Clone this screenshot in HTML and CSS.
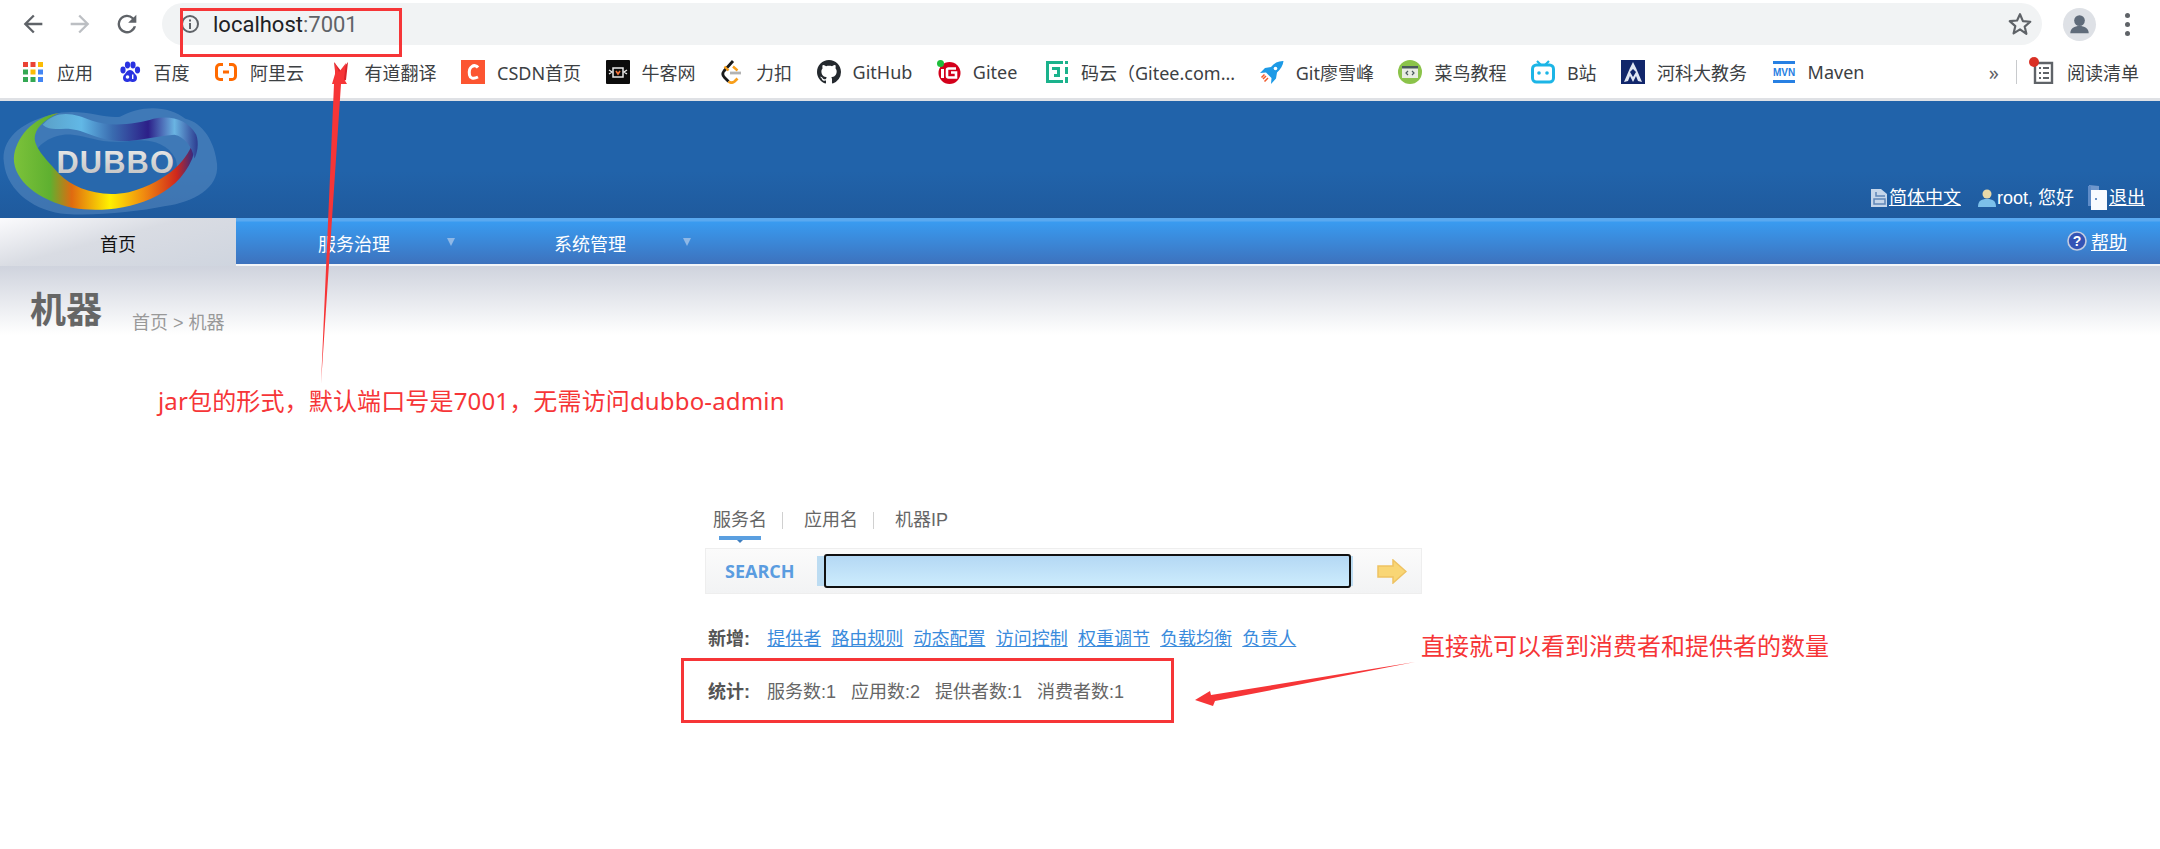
FILE: index.html
```html
<!DOCTYPE html>
<html lang="en">
<head>
    <meta charset="UTF-8">
    <title>Dubbo Admin</title>
    <link rel="stylesheet" href="styles.css">
</head>
<body>
    <!-- Browser toolbar -->
    <div class="toolbar">
        <svg class="tool-icon" viewBox="0 0 24 24"><path d="M20 11H7.8l5.6-5.6L12 4l-8 8 8 8 1.4-1.4L7.8 13H20z" fill="#5f6368"/></svg>
        <svg class="tool-icon" viewBox="0 0 24 24"><path d="M4 11h12.2l-5.6-5.6L12 4l8 8-8 8-1.4-1.4 5.6-5.6H4z" fill="#bcbfc3"/></svg>
        <svg class="tool-icon" viewBox="0 0 24 24"><path d="M17.65 6.35A8 8 0 1 0 19.74 14h-2.08A6 6 0 1 1 12 6c1.66 0 3.14.69 4.22 1.78L13 11h7V4z" fill="#5f6368"/></svg>
        <div class="omnibox">
            <svg class="info-icon" viewBox="0 0 20 20"><circle cx="10" cy="10" r="8" fill="none" stroke="#5f6368" stroke-width="2"/><rect x="9" y="9" width="2" height="6" fill="#5f6368"/><rect x="9" y="5.5" width="2" height="2" fill="#5f6368"/></svg>
            <span class="url">localhost<span class="url-port">:7001</span></span>
            <svg class="star-icon" viewBox="0 0 24 24"><path d="M12 3l2.7 6.3 6.8.6-5.2 4.5 1.6 6.7L12 17l-5.9 3.6 1.6-6.7-5.2-4.5 6.8-.6z" fill="none" stroke="#5f6368" stroke-width="2" stroke-linejoin="round"/></svg>
        </div>
        <div class="avatar">
            <svg viewBox="0 0 34 34"><circle cx="17" cy="13" r="5.5" fill="#5f6b7a"/><path d="M7.5 26c0-5.5 4.5-7.5 9.5-7.5s9.500 2 9.500 7.500z" fill="#5f6b7a"/></svg>
        </div>
        <div class="menu-dots"><i></i><i></i><i></i></div>
    </div>

    <!-- Bookmarks -->
    <div class="bookmarks">
        <a class="bm">
            <svg class="fav" viewBox="0 0 24 24">
                <rect x="2" y="2" width="5" height="5" fill="#ea4335"/><rect x="9.500" y="2" width="5" height="5" fill="#ea4335"/><rect x="17" y="2" width="5" height="5" fill="#fbbc05"/>
                <rect x="2" y="9.500" width="5" height="5" fill="#34a853"/><rect x="9.500" y="9.500" width="5" height="5" fill="#fbbc05"/><rect x="17" y="9.500" width="5" height="5" fill="#4285f4"/>
                <rect x="2" y="17" width="5" height="5" fill="#34a853"/><rect x="9.500" y="17" width="5" height="5" fill="#34a853"/><rect x="17" y="17" width="5" height="5" fill="#4285f4"/>
            </svg>应用
        </a>
        <a class="bm">
            <svg class="fav" viewBox="0 0 24 24" fill="#2932e1">
                <ellipse cx="5" cy="10" rx="2.600" ry="3.400"/><ellipse cx="9.500" cy="5" rx="2.600" ry="3.400"/><ellipse cx="15" cy="5" rx="2.600" ry="3.400"/><ellipse cx="19.500" cy="10" rx="2.600" ry="3.400"/>
                <path d="M12 10c-3 0-4 3-6 5-2 2.500-1 7 3 7 1.500 0 2-.5 3-.5s1.500.5 3 .5c4 0 5-4.500 3-7-2-2-3-5-6-5z"/>
                <circle cx="9.500" cy="17" r="1.800" fill="#fff"/><rect x="14" y="14.500" width="1.400" height="4.500" fill="#fff"/>
            </svg>百度
        </a>
        <a class="bm">
            <svg class="fav" viewBox="0 0 24 24" fill="none" stroke="#ff6a00" stroke-width="3.400">
                <path d="M9 4.500H6a3.500 3.500 0 0 0-3.500 3.500v8A3.500 3.500 0 0 0 6 19.500h3M15 4.500h3A3.500 3.500 0 0 1 21.500 8v8a3.500 3.500 0 0 1-3.500 3.500h-3M9 12h6" stroke-width="3"/>
            </svg>阿里云
        </a>
        <a class="bm">
            <svg class="fav" viewBox="0 0 24 24"><path d="M5 2l7 9 7-9-2 18-5 2-5-2z" fill="#d8232a"/></svg>有道翻译
        </a>
        <a class="bm">
            <svg class="fav" viewBox="0 0 24 24"><rect width="24" height="24" fill="#fc5531"/><path d="M17 7.500C15.500 5.500 13 5 11 6.500 8.500 8 8 12 8.500 15c.5 3 3.500 4.500 8.500 2" fill="none" stroke="#fff" stroke-width="3"/></svg>CSDN首页
        </a>
        <a class="bm">
            <svg class="fav" viewBox="0 0 24 24"><rect width="24" height="24" rx="1" fill="#0c0c0c"/><path d="M7 8h10v9H7z" fill="none" stroke="#e8e8e8" stroke-width="1.500"/><path d="M3 10l3 2-3 2M21 10l-3 2 3 2" fill="none" stroke="#e8e8e8" stroke-width="1.400"/><path d="M10 11l2 3 2-3" fill="none" stroke="#f5743b" stroke-width="1.600"/></svg>牛客网
        </a>
        <a class="bm">
            <svg class="fav" viewBox="0 0 24 24" fill="none"><path d="M13 1L4 11c-2 2.500-1 5 .5 6.500l4 4" stroke="#1a1a1a" stroke-width="2.800"/><path d="M8.500 21.500c2 1.500 4 1.500 6 0l3-3" stroke="#f89f1b" stroke-width="2.800"/><path d="M4.500 6.500l4 4M13 6.500l4.500 4" stroke="#f89f1b" stroke-width="2.400"/><path d="M10 13h11" stroke="#b3b3b3" stroke-width="2.800"/></svg>力扣
        </a>
        <a class="bm">
            <svg class="fav" viewBox="0 0 16 16"><path fill="#24292e" d="M8 0C3.580 0 0 3.580 0 8c0 3.540 2.290 6.530 5.470 7.590.4.070.55-.17.55-.38 0-.19-.010-.82-.010-1.490-2.010.37-2.530-.49-2.690-.94-.09-.23-.48-.94-.82-1.130-.28-.15-.68-.52-.010-.53.630-.010 1.080.58 1.230.82.720 1.210 1.870.87 2.330.66.070-.52.280-.87.510-1.070-1.780-.2-3.640-.89-3.640-3.950 0-.87.310-1.590.82-2.150-.08-.2-.36-1.020.08-2.120 0 0 .67-.21 2.200.82.640-.18 1.320-.27 2-.27s1.360.09 2 .27c1.530-1.040 2.200-.82 2.200-.82.440 1.100.16 1.920.08 2.120.51.560.82 1.270.82 2.150 0 3.070-1.870 3.750-3.650 3.950.29.250.54.730.54 1.480 0 1.070-.010 1.930-.010 2.200 0 .21.150.46.550.38A8.010 8.010 0 0 0 16 8c0-4.420-3.580-8-8-8z"/></svg>GitHub
        </a>
        <a class="bm">
            <svg class="fav" viewBox="0 0 24 24"><circle cx="12.500" cy="13" r="11" fill="#d3001b"/><circle cx="3.500" cy="3.500" r="3.500" fill="#1fbd3c"/><rect x="4" y="9" width="3" height="9" fill="#fff"/><path d="M19 8.500h-7.500a1.500 1.500 0 0 0-1.500 1.500v6a1.500 1.500 0 0 0 1.500 1.500H19v-5h-5" fill="none" stroke="#fff" stroke-width="2.600"/></svg>Gitee
        </a>
        <a class="bm bm-mayun">
            <svg class="fav" viewBox="0 0 24 24"><path d="M1 1h17v3H4v16h14v3H1z" fill="#1ab28c"/><path d="M7 7h8v10H9v-3h3v-4H7z" fill="#1ab28c"/><rect x="20" y="1" width="3" height="3" fill="#1ab28c"/><rect x="20" y="7" width="3" height="7" fill="#1ab28c"/><rect x="20" y="17" width="3" height="6" fill="#1ab28c"/></svg>码云（Gitee.com...
        </a>
        <a class="bm">
            <svg class="fav" viewBox="0 0 24 24"><path d="M23 1c-5 0-9 2-12 6L5 8l-5 5 6-.5 5.500 5.500-.5 6 5-5.500 1-6c3.500-3 6-7 6.500-11.500z" fill="#1d9ae6"/><circle cx="15.500" cy="8.500" r="1.800" fill="#fff"/><path d="M6 16l-3 3M8 18l-3.500 3.500M4.500 14.500l-3 3" stroke="#f1592a" stroke-width="1.500"/></svg>Git廖雪峰
        </a>
        <a class="bm">
            <svg class="fav" viewBox="0 0 24 24"><circle cx="12" cy="12" r="12" fill="#8bc34a"/><rect x="4" y="6" width="16" height="12" fill="#e8ece2"/><rect x="4" y="6" width="16" height="2.500" fill="#4a5a5c"/><path d="M10 11l-2 2 2 2M14 11l2 2-2 2" fill="none" stroke="#4a5a5c" stroke-width="1.200"/></svg>菜鸟教程
        </a>
        <a class="bm">
            <svg class="fav" viewBox="0 0 24 24"><path d="M6 1l4 4M18 1l-4 4" stroke="#1cb5e6" stroke-width="2.200"/><rect x="1.500" y="5" width="21" height="17" rx="4" fill="#fff" stroke="#1cb5e6" stroke-width="3"/><circle cx="8" cy="13" r="1.800" fill="#1cb5e6"/><circle cx="16" cy="13" r="1.800" fill="#1cb5e6"/></svg>B站
        </a>
        <a class="bm">
            <svg class="fav" viewBox="0 0 24 24"><rect width="24" height="24" fill="#11266b"/><path d="M12 2l3 6 6 14-4-1-2-5-3 6-3-6-2 5-4 1L9 8z" fill="#dfe5f2"/><path d="M12 9l-3 3 3 5 3-5z" fill="#11266b"/></svg>河科大教务
        </a>
        <a class="bm">
            <svg class="fav" viewBox="0 0 24 24"><rect x="1" y="1" width="22" height="3" fill="#2780e3"/><rect x="1" y="20" width="22" height="3" fill="#2780e3"/><text x="12" y="16" class="mvn-text">MVN</text></svg>Maven
        </a>
        <span class="bm-more">»</span>
        <span class="bm-sep"></span>
        <a class="bm bm-reader">
            <span class="reader-icon">
                <svg class="fav" viewBox="0 0 24 24"><path d="M4 3h17v20H4z" fill="none" stroke="#5f6368" stroke-width="2.400"/><path d="M8 8h2M12 8h6M8 13h2M12 13h6M8 18h2M12 18h6" stroke="#5f6368" stroke-width="2"/></svg>
                <i class="reader-dot"></i>
            </span>阅读清单
        </a>
    </div>

    <!-- Dubbo header -->
    <div class="site-header">
        <svg class="logo" viewBox="0 0 220 118">
            <defs>
                <linearGradient id="ringBottom" x1="0" x2="1" y1="0" y2="0">
                    <stop offset="0" stop-color="#7cc23a"/>
                    <stop offset="0.2" stop-color="#5fb030"/>
                    <stop offset="0.32" stop-color="#e06a10"/>
                    <stop offset="0.53" stop-color="#fff000"/>
                    <stop offset="0.72" stop-color="#f08a10"/>
                    <stop offset="0.9" stop-color="#d0281c"/>
                    <stop offset="1" stop-color="#2a2a88"/>
                </linearGradient>
                <linearGradient id="ringTop" x1="0" x2="1" y1="0" y2="0">
                    <stop offset="0" stop-color="#5aa0c8"/>
                    <stop offset="0.25" stop-color="#62b8e6"/>
                    <stop offset="0.45" stop-color="#3a6cb0"/>
                    <stop offset="0.68" stop-color="#2c1f88"/>
                    <stop offset="0.85" stop-color="#6ab4e2"/>
                    <stop offset="1" stop-color="#2c3c90"/>
                </linearGradient>
                <linearGradient id="logoText" x1="0" x2="0" y1="0" y2="1">
                    <stop offset="0" stop-color="#ececec"/>
                    <stop offset="1" stop-color="#bdbdbd"/>
                </linearGradient>
            </defs>
            <path d="M3 62C0 40 18 22 50 14c30-8 52 4 70 2 20-12 50-12 66 2 18 4 30 24 32 46 2 24-24 38-52 42-30 6-70 10-100 8C36 112 6 92 3 62z" fill="#6f9ccb" opacity="0.4"/>
            <path d="M32 60c2-18 24-28 40-26 20 2 28 10 60 6 18-2 36 2 44 18 6 16-6 32-30 42-26 8-60 6-80-4C44 90 30 76 32 60z" fill="#2163aa" opacity="0.75"/>
            <path d="M58 12C32 16 14 38 13 58c0 22 24 42 60 50 36 6 100-2 120-50 2-6 3-16 2-20-6 20-24 42-66 54-30 6-56-4-70-18-8-10-24-24-25-36C34 28 42 20 58 12z" fill="url(#ringBottom)"/>
            <path d="M42 24C56 8 74 12 92 20c16 6 44 4 62-2 16-4 34 0 43 16 3 8 1 20-2 24-2-12-10-22-20-24-24 2-40 8-60 6-22-2-32-12-50-12-8 0-16 2-23-4z" fill="url(#ringTop)"/>
            <text x="56" y="73" class="logo-text" fill="url(#logoText)">DUBBO</text>
        </svg>
        <div class="header-links">
            <a class="header-link">
                <svg class="small-icon" viewBox="0 0 18 20"><path d="M1 1h10l6 5v13H1z" fill="#c5d6ea"/><path d="M6 4v4h9M4 11h11v5H4z" fill="none" stroke="#5f86b8" stroke-width="1.500"/></svg><u>简体中文</u>
            </a>
            <a class="header-link">
                <svg class="small-icon" viewBox="0 0 18 20"><circle cx="9" cy="6" r="4.500" fill="#e9d9a8"/><path d="M0 19c0-6 3-8 9-8s9 2 9 8z" fill="#7cc0ea"/></svg>root, 您好
            </a>
            <a class="header-link header-logout">
                <svg class="door-icon" viewBox="0 0 20 27"><path d="M1 1l10 1v4H1z" fill="#6f97cc"/><path d="M0 2h3v20H0z" fill="#5f8cc8"/><path d="M3 6h15a1 1 0 0 1 1 1v19H3z" fill="#f8fbff"/><circle cx="8" cy="15" r="1" fill="#3c6fb0"/></svg><u>退出</u>
            </a>
        </div>
    </div>

    <!-- Main nav -->
    <div class="nav">
        <a class="nav-tab nav-active">首页</a>
        <a class="nav-tab">服务治理<i class="nav-caret"></i></a>
        <a class="nav-tab">系统管理<i class="nav-caret"></i></a>
        <a class="nav-help">
            <svg class="help-icon" viewBox="0 0 20 20"><circle cx="10" cy="10" r="9" fill="#3453b5" stroke="#c4cce0" stroke-width="1.600"/><text x="10" y="15" class="help-mark">?</text></svg><u>帮助</u>
        </a>
    </div>

    <!-- Page -->
    <div class="page-head">
        <h1 class="page-title">机器</h1>
        <span class="crumbs">首页 &gt; 机器</span>
    </div>

    <div class="search-wrap">
        <div class="search-tabs">
            <span class="search-tab tab-on">服务名</span>
            <span class="tab-sep"></span>
            <span class="search-tab">应用名</span>
            <span class="tab-sep"></span>
            <span class="search-tab">机器IP</span>
        </div>
        <div class="search-box">
            <span class="search-label">SEARCH</span>
            <div class="search-strip"><input class="search-input" type="text"></div>
            <svg class="search-go" viewBox="0 0 30 25"><path d="M1 7h15V1l13 11.500L16 24v-6H1z" fill="#f9d675" stroke="#eec262" stroke-width="1.500"/></svg>
        </div>
        <div class="line line-add">
            <b>新增:</b>
            <a>提供者</a><a>路由规则</a><a>动态配置</a><a>访问控制</a><a>权重调节</a><a>负载均衡</a><a>负责人</a>
        </div>
        <div class="line line-stat">
            <b>统计:</b>
            <span>服务数:1</span><span>应用数:2</span><span>提供者数:1</span><span>消费者数:1</span>
        </div>
    </div>

    <!-- Annotations drawn over the screenshot -->
    <div class="mark mark-url"></div>
    <div class="mark mark-stat"></div>
    <svg class="arrows" viewBox="0 0 2160 849">
        <polygon points="335,63 339,72 346,63 344,79 347,84 341,84 321,384 334,84 332,84 335,74" fill="#f63537"/>
        <polygon points="1195,700 1210,691 1211,695 1415,662 1215,701 1213,706" fill="#f63537"/>
    </svg>
    <div class="note note-jar">jar包的形式，默认端口号是7001，无需访问dubbo-admin</div>
    <div class="note note-count">直接就可以看到消费者和提供者的数量</div>
</body>
</html>
```

FILE: styles.css
```css
/* General */
html, body {
    margin: 0;
    padding: 0;
}
body {
    position: relative;
    width: 2160px;
    height: 849px;
    overflow: hidden;
    background: #fff;
    font-family: "Liberation Sans", "Noto Sans CJK SC", sans-serif;
    color: #555;
}
a {
    text-decoration: none;
}

/* Browser toolbar */
.toolbar {
    display: flex;
    align-items: center;
    height: 48px;
    padding-left: 19px;
}
.tool-icon {
    width: 28px;
    height: 28px;
    margin-right: 19px;
}
.omnibox {
    display: flex;
    align-items: center;
    flex: 1;
    height: 42px;
    margin-left: 2px;
    padding: 0 9px 0 18px;
    background: #f1f3f4;
    border-radius: 21px;
}
.info-icon {
    width: 20px;
    height: 20px;
    margin-right: 13px;
}
.url {
    flex: 1;
    font-family: "Roboto", sans-serif;
    font-size: 22px;
    color: #202124;
}
.url-port {
    color: #5f6368;
}
.star-icon {
    width: 26px;
    height: 26px;
}
.avatar {
    width: 33px;
    height: 33px;
    margin-left: 21px;
    border-radius: 50%;
    background: #dee1e6;
}
.avatar svg {
    display: block;
}
.menu-dots {
    display: flex;
    flex-direction: column;
    gap: 4px;
    width: 5px;
    margin: 0 30px 0 29px;
}
.menu-dots i {
    width: 5px;
    height: 5px;
    border-radius: 50%;
    background: #5f6368;
}

/* Bookmarks */
.bookmarks {
    display: flex;
    align-items: center;
    gap: 24.5px;
    height: 48px;
    padding: 0 21px 2px 21px;
    border-bottom: 3px solid #dfe1e5;
    font-family: "Noto Sans", "Noto Sans CJK SC", sans-serif;
    font-size: 18px;
    color: #3c4043;
}
.bm {
    display: flex;
    align-items: center;
    gap: 12px;
    white-space: nowrap;
}
.bm-mayun {
    margin-left: 3px;
}
.fav {
    width: 24px;
    height: 24px;
    flex: none;
}
.mvn-text {
    font-family: "Liberation Sans", sans-serif;
    font-size: 10px;
    font-weight: bold;
    fill: #2780e3;
    text-anchor: middle;
}
.bm-more {
    margin-left: auto;
    font-size: 20px;
    color: #5f6368;
}
.bm-sep {
    width: 1px;
    height: 24px;
    margin-left: -8px;
    background: #c8cacd;
}
.bm-reader {
    margin-left: -10px;
}
.reader-icon {
    position: relative;
    display: block;
    height: 24px;
}
.reader-dot {
    position: absolute;
    left: -2px;
    top: -3px;
    width: 10px;
    height: 10px;
    border-radius: 50%;
    background: #d93025;
}

/* Dubbo header */
.site-header {
    display: flex;
    justify-content: space-between;
    align-items: flex-end;
    height: 117px;
    background: linear-gradient(#2163aa 60%, #1f5a9d);
}
.logo {
    width: 220px;
    height: 117px;
}
.logo-text {
    font-family: "Liberation Sans", sans-serif;
    font-size: 31px;
    font-weight: bold;
    letter-spacing: 1.2px;
}
.header-links {
    display: flex;
    align-items: flex-end;
    padding: 0 15px 7px 0;
    font-size: 18px;
    line-height: 26px;
    color: #fff;
}
.header-link {
    display: flex;
    align-items: center;
    margin-left: 17px;
}
.header-logout {
    margin-left: 14px;
}
.small-icon {
    width: 18px;
    height: 20px;
    margin-right: 1px;
}
.door-icon {
    width: 20px;
    height: 27px;
    margin-right: 1px;
}

/* Main nav */
.nav {
    display: flex;
    align-items: center;
    height: 46px;
    border-bottom: 2px solid #f3f5f8;
    background: linear-gradient(#5aa9f0 0, #5aa9f0 3px, #399bf0 4px, #3d72bd 100%);
    color: #fff;
    font-size: 18px;
}
.nav-tab {
    position: relative;
    width: 236px;
    height: 46px;
    line-height: 54px;
    text-align: center;
}
.nav-active {
    height: 48px;
    margin-bottom: -2px;
    background: linear-gradient(165deg, #fbfbfd 0, #d9dce3 45%, #cfd5df 100%);
    color: #111;
}
.nav-caret {
    position: absolute;
    left: 211px;
    top: 20px;
    border-left: 4.500px solid transparent;
    border-right: 4.500px solid transparent;
    border-top: 8px solid #8fb8e6;
}
.nav-help {
    display: flex;
    align-items: center;
    gap: 4px;
    margin-left: auto;
    padding-right: 33px;
    color: #fff;
}
.help-icon {
    width: 20px;
    height: 20px;
}
.help-mark {
    font-family: "Liberation Sans", sans-serif;
    font-size: 14px;
    font-weight: bold;
    fill: #fff;
    text-anchor: middle;
}

/* Page head */
.page-head {
    display: flex;
    align-items: flex-end;
    height: 66px;
    padding: 0 0 3px 30px;
    background: linear-gradient(#cfd3dd 0, #fff 100%);
}
.page-title {
    margin: 0;
    font-size: 36px;
    line-height: 42px;
    font-weight: bold;
    color: #666;
}
.crumbs {
    margin: 0 0 -3px 30px;
    font-size: 18px;
    line-height: 24px;
    color: #999;
}

/* Search block */
.search-wrap {
    width: 717px;
    margin: 162px 0 0 705px;
}
.search-tabs {
    display: flex;
    align-items: flex-start;
    box-sizing: border-box;
    height: 51px;
    padding: 9px 0 0 8px;
    font-size: 18px;
    color: #666;
}
.search-tab {
    position: relative;
    line-height: 28px;
}
.tab-on::before {
    content: "";
    position: absolute;
    left: 50%;
    bottom: -9px;
    margin-left: -3px;
    border-left: 3px solid transparent;
    border-right: 3px solid transparent;
    border-top: 3px solid #3f7fc0;
}
.tab-on::after {
    content: "";
    position: absolute;
    left: 6px;
    right: 6px;
    bottom: -6px;
    height: 4px;
    background: #5a9fe0;
}
.tab-sep {
    width: 1px;
    height: 17px;
    margin: 6px 21px 0 15px;
    background: #d0d0d0;
}
.search-box {
    display: flex;
    align-items: center;
    height: 46px;
    box-sizing: border-box;
    padding-left: 19px;
    border: 1px solid #eee;
    background: linear-gradient(#fbfbfb, #f2f3f4);
}
.search-label {
    width: 92px;
    font-family: "Open Sans", "Liberation Sans", sans-serif;
    font-size: 18px;
    font-weight: bold;
    color: #5a9ce0;
}
.search-strip {
    box-sizing: border-box;
    width: 536px;
    height: 30px;
    padding-left: 7px;
    background: #bcdcf2;
}
.search-input {
    display: block;
    box-sizing: border-box;
    width: 527px;
    height: 34px;
    margin-top: -2px;
    padding: 0;
    border: 2px solid #111;
    border-radius: 3px;
    background: linear-gradient(#b4d8f4, #cdecfd);
}
.search-go {
    width: 30px;
    height: 25px;
    margin-left: 24px;
}
.line {
    display: flex;
    align-items: center;
    gap: 10.2px;
    padding-left: 3px;
    font-size: 18px;
    line-height: 26px;
}
.line b {
    width: 49px;
    color: #555;
}
.line-add {
    margin-top: 32px;
}
.line-add a {
    color: #3a8bdc;
    text-decoration: underline;
}
.line-stat {
    gap: 15px;
    margin-top: 27px;
    color: #666;
}
.line-stat b {
    margin-right: -5px;
}

/* Annotations */
.mark {
    position: absolute;
    box-sizing: border-box;
    border: 3px solid #f63537;
}
.mark-url {
    left: 180px;
    top: 8px;
    width: 222px;
    height: 49px;
}
.mark-stat {
    left: 681px;
    top: 658px;
    width: 493px;
    height: 65px;
}
.arrows {
    position: absolute;
    left: 0;
    top: 0;
    width: 2160px;
    height: 849px;
}
.note {
    position: absolute;
    font-family: "Noto Sans", "Noto Sans CJK SC", sans-serif;
    font-size: 24px;
    line-height: 32px;
    color: #f63537;
    white-space: nowrap;
}
.note-jar {
    left: 158px;
    top: 385px;
    letter-spacing: 0.15px;
}
.note-count {
    left: 1421px;
    top: 630px;
}
```
